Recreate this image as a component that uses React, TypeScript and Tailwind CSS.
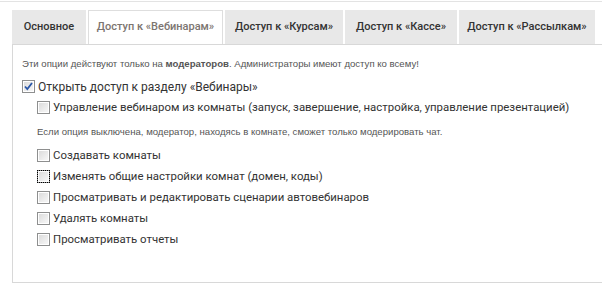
import React from "react";

function Box({ checked = false, focus = false }: { checked?: boolean; focus?: boolean }) {
  return (
    <span className="relative inline-flex h-[13px] w-[13px] shrink-0 items-center justify-center border border-[#8e8f8f] bg-white">
      <span className="absolute inset-[1px] bg-gradient-to-br from-[#dcdcdc] to-[#f7f7f7]" />
      {focus && <span className="absolute -inset-[1px] border border-dotted border-black" />}
      {checked && (
        <svg className="relative" width="9" height="9" viewBox="0 0 9 9">
          <path d="M1 4.5 L3.3 7 L8 1" fill="none" stroke="#2a57a8" strokeWidth="1.8" />
        </svg>
      )}
    </span>
  );
}

function Row({ label, checked, focus, indent }: { label: string; checked?: boolean; focus?: boolean; indent?: boolean }) {
  return (
    <div className={`flex h-[21px] items-center gap-[3px] ${indent ? "pl-[15px]" : ""}`}>
      <Box checked={checked} focus={focus} />
      <span
        className={`${indent ? "text-[11.4px]" : "text-[12px]"} text-[#333]`}
        style={{ fontFamily: "Roboto, sans-serif" }}
      >
        {label}
      </span>
    </div>
  );
}

export default function App() {
  const tabs = [
    { t: "Основное", w: "w-[74px]" },
    { t: "Доступ к «Вебинарам»", w: "w-[135px]", active: true },
    { t: "Доступ к «Курсам»", w: "w-[118px]" },
    { t: "Доступ к «Кассе»", w: "w-[112px]" },
    { t: "Доступ к «Рассылкам»", w: "w-[136px]" },
  ];
  return (
    <div className="h-[287px] w-[602px] overflow-hidden bg-white" style={{ fontFamily: '"Liberation Sans", Arial, sans-serif' }}>
      <div className="mt-[1px] h-[1px] bg-[#e3e3e3]" />
      <div className="mt-[8px] flex gap-[2px] pl-[12px]" style={{ fontFamily: "Roboto, sans-serif" }}>
        {tabs.map((tb) => (
          <div
            key={tb.t}
            className={`${tb.w} relative z-10 flex h-[34px] items-center justify-center text-[11px] font-medium ${
              tb.active
                ? "border border-b-0 border-[#dedede] bg-white text-[#7c7570]"
                : "mb-[1px] h-[33px] bg-[#e8e8e8] text-[#333]"
            }`}
          >
            {tb.t}
          </div>
        ))}
      </div>
      <div className="-mt-[1px] ml-[12px] h-[239px] w-[600px] border border-[#d8d8d8] pl-[9px] pt-[12px]">
        <div className="text-[9.6px] leading-[14px] text-[#555]">
          Эти опции действуют только на <b>модераторов</b>. Администраторы имеют доступ ко всему!
        </div>
        <div className="mt-[5px]">
          <Row label="Открыть доступ к разделу «Вебинары»" checked />
          <Row label="Управление вебинаром из комнаты (запуск, завершение, настройка, управление презентацией)" indent />
          <div className="pl-[15px] pt-[7px] pb-[6px] text-[9.6px] leading-[14px] text-[#555]">
            Если опция выключена, модератор, находясь в комнате, сможет только модерировать чат.
          </div>
          <Row label="Создавать комнаты" indent />
          <Row label="Изменять общие настройки комнат (домен, коды)" indent focus />
          <Row label="Просматривать и редактировать сценарии автовебинаров" indent />
          <Row label="Удалять комнаты" indent />
          <Row label="Просматривать отчеты" indent />
        </div>
      </div>
    </div>
  );
}
